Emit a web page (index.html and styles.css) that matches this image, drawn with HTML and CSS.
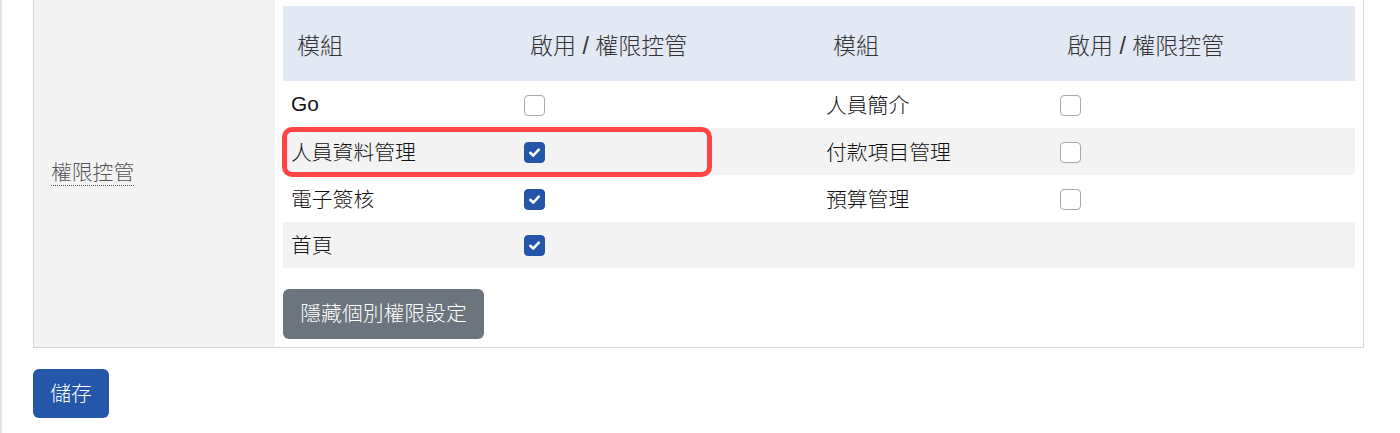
FILE: index.html
```html
<!DOCTYPE html>
<html lang="zh-Hant">
<head>
<meta charset="utf-8">
<title>權限控管</title>
<link rel="stylesheet" href="styles.css">
</head>
<body>
<div class="page">
  <div class="form-box">
    <div class="label-cell"><span class="label">權限控管</span></div>
    <div class="field-cell">
      <div class="perm-wrap">
        <table class="perm-table">
          <colgroup>
            <col class="c-mod"><col class="c-chk"><col class="c-mod2"><col class="c-chk2">
          </colgroup>
          <thead>
            <tr><th>模組</th><th>啟用 / 權限控管</th><th>模組</th><th>啟用 / 權限控管</th></tr>
          </thead>
          <tbody>
            <tr>
              <td>Go</td><td><span class="cb"></span></td>
              <td>人員簡介</td><td><span class="cb"></span></td>
            </tr>
            <tr class="alt">
              <td>人員資料管理</td><td><span class="cb checked"><svg viewBox="0 0 21 21"><path d="M6.3 10.8l2.9 2.8 5.6-5.9"/></svg></span></td>
              <td>付款項目管理</td><td><span class="cb"></span></td>
            </tr>
            <tr>
              <td>電子簽核</td><td><span class="cb checked"><svg viewBox="0 0 21 21"><path d="M6.3 10.8l2.9 2.8 5.6-5.9"/></svg></span></td>
              <td>預算管理</td><td><span class="cb"></span></td>
            </tr>
            <tr class="alt last">
              <td>首頁</td><td><span class="cb checked"><svg viewBox="0 0 21 21"><path d="M6.3 10.8l2.9 2.8 5.6-5.9"/></svg></span></td>
              <td></td><td></td>
            </tr>
          </tbody>
        </table>
        <div class="highlight"></div>
      </div>
      <button class="btn btn-secondary">隱藏個別權限設定</button>
    </div>
  </div>
  <button class="btn btn-primary">儲存</button>
</div>
</body>
</html>
```

FILE: styles.css
```css
html, body {
  margin: 0;
  padding: 0;
  background: #ffffff;
}
body {
  font-family: "Liberation Sans", "Noto Sans CJK TC", sans-serif;
  font-weight: 300;
  color: #111;
  border-left: 2px solid #e4e4e4;
  min-height: 433px;
  box-sizing: border-box;
}
.page {
  padding-left: 31px;
  width: 1331px;
}
.form-box {
  margin-top: -3px;
  border: 1px solid #d6d6d6;
  display: grid;
  grid-template-columns: 241px 1fr;
}
.label-cell {
  background: #f3f3f3;
  display: flex;
  align-items: center;
  padding-left: 17px;
}
.label {
  font-size: 20.8px;
  color: #555;
  line-height: 1.4;
  text-decoration: underline dotted #555;
  text-decoration-thickness: 1px;
  text-underline-offset: 5px;
  margin-top: 1px;
}
.field-cell {
  padding: 8px;
}
.perm-wrap {
  position: relative;
}
.perm-table {
  width: 1072px;
  table-layout: fixed;
  border-collapse: collapse;
  border-spacing: 0;
}
.c-mod { width: 233px; }
.c-chk { width: 302px; }
.c-mod2 { width: 234px; }
.c-chk2 { width: 303px; }
.perm-table th {
  background: #e2e8f4;
  height: 75px;
  padding: 0 14px;
  text-align: left;
  font-weight: 300;
  font-size: 23px;
  color: #333;
  vertical-align: middle;
}
.perm-table th:nth-child(3),
.perm-table th:nth-child(4) {
  padding-left: 15px;
}
.perm-table td {
  height: 45px;
  padding: 0 8px 2px;
  font-size: 20.8px;
  color: #111;
  vertical-align: middle;
}
.perm-table tr.last td {
  height: 44px;
}
.perm-table tr.alt td {
  background: #f3f3f3;
}
.cb {
  display: block;
  width: 21px;
  height: 21px;
  box-sizing: border-box;
  border: 1px solid #a8a8a8;
  border-radius: 4px;
  background: #fff;
  margin-top: 3px;
}
.cb.checked {
  background: #2455a8;
  border-color: #2455a8;
}
.cb svg {
  display: block;
  width: 21px;
  height: 21px;
  margin: -1px;
}
.cb svg path {
  fill: none;
  stroke: #fff;
  stroke-width: 2.6;
  stroke-linecap: round;
  stroke-linejoin: round;
}
.highlight {
  position: absolute;
  left: -1px;
  top: 121px;
  width: 430px;
  height: 50px;
  box-sizing: border-box;
  border: 5px solid #ff4444;
  border-radius: 10px;
  pointer-events: none;
}
.btn {
  display: block;
  border: none;
  font-family: "Liberation Sans", "Noto Sans CJK TC", sans-serif;
  font-weight: 300;
  font-size: 20.8px;
  line-height: 30px;
  color: #fff;
  border-radius: 6px;
  cursor: pointer;
}
.btn-secondary {
  margin-top: 21px;
  background: #6c757d;
  width: 201px;
  height: 50px;
  padding: 0;
}
.btn-primary {
  margin-top: 21px;
  background: #2456aa;
  width: 76px;
  height: 49px;
  padding: 0;
}
```
